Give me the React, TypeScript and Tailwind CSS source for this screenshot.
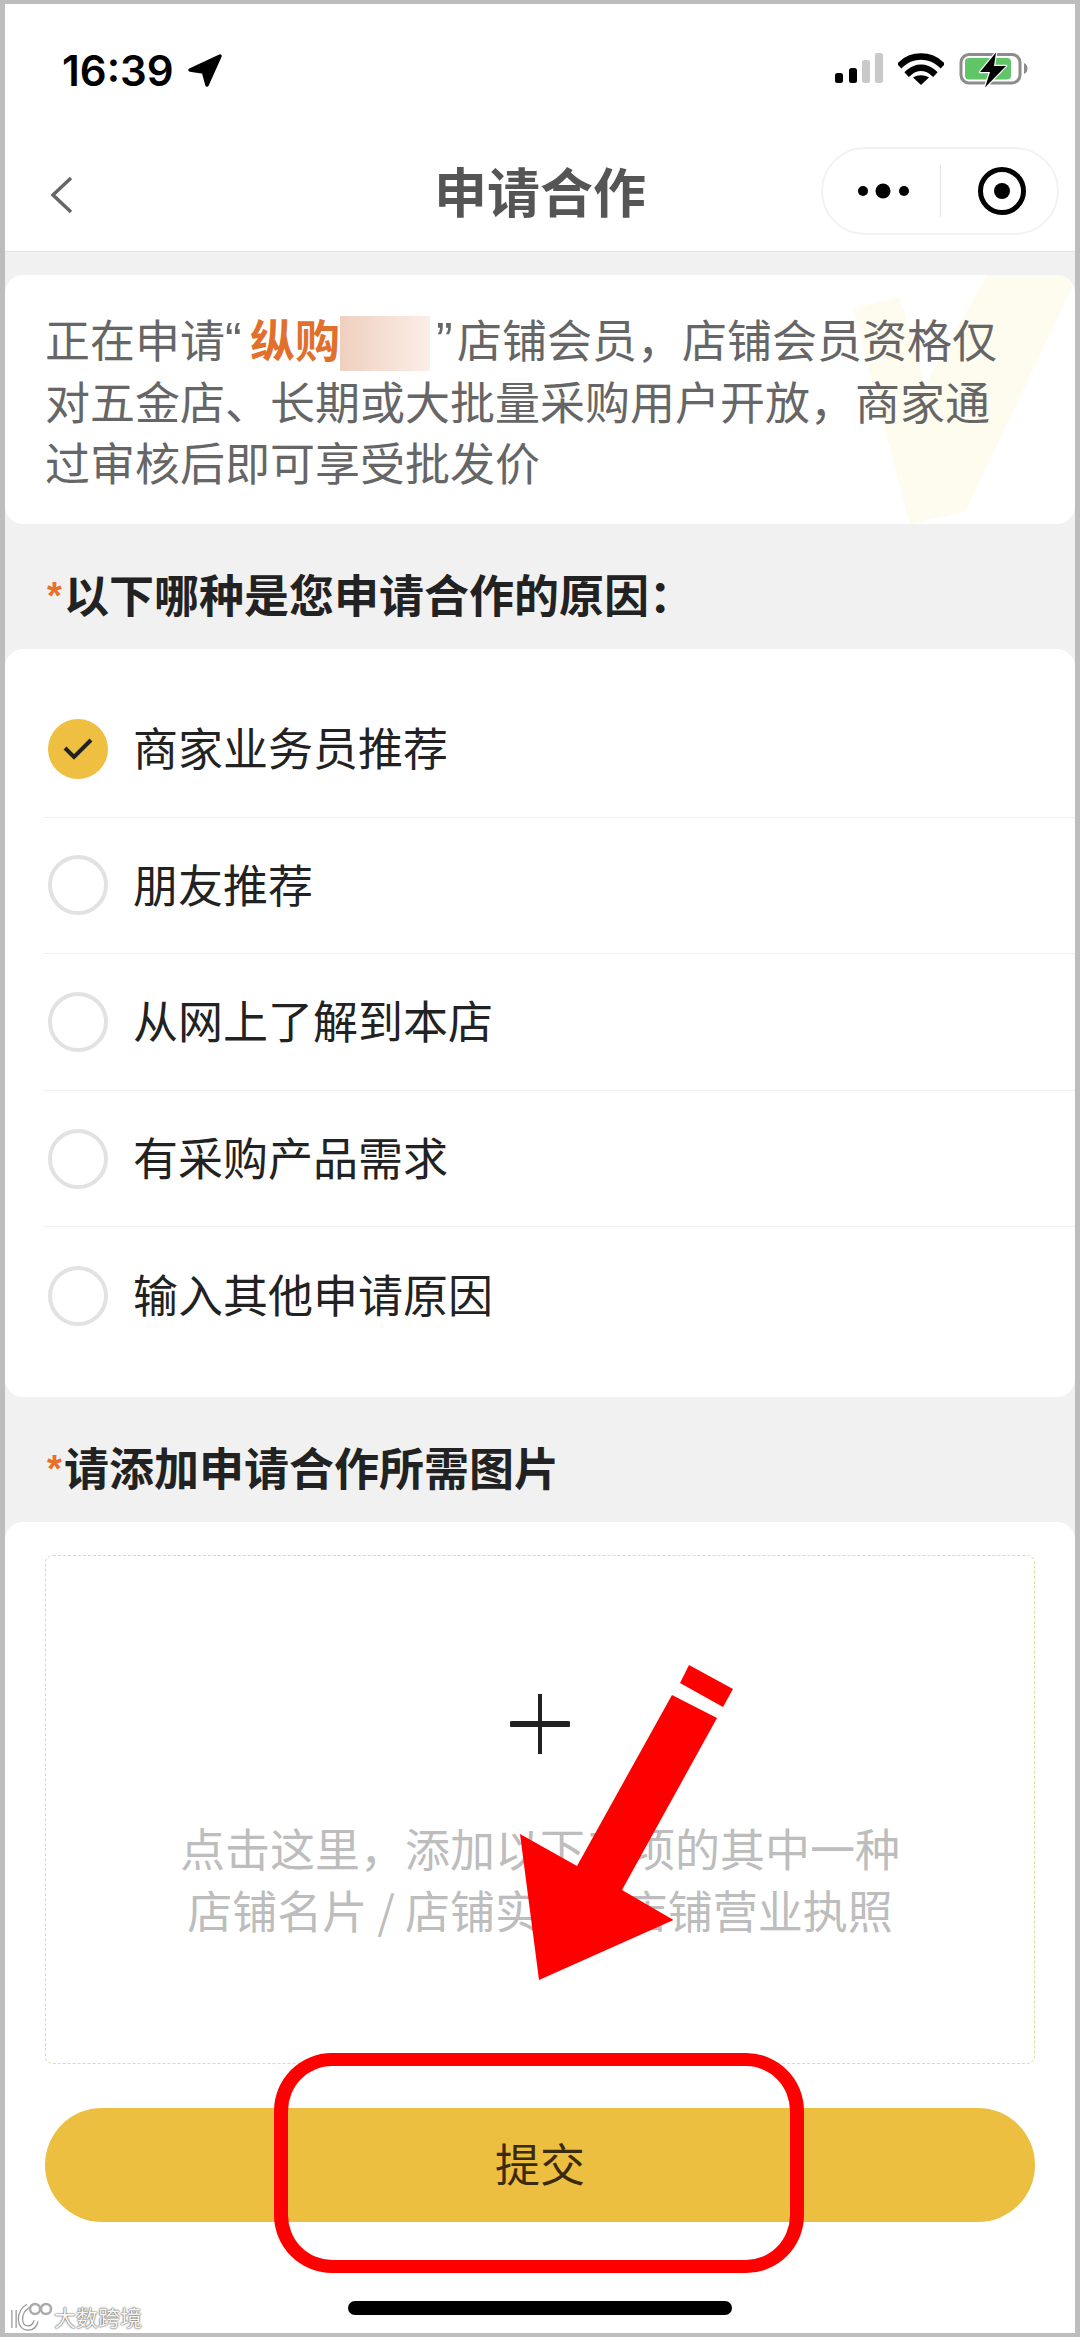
const cjk = "font-['Noto_Sans_CJK_SC','Noto_Sans',sans-serif]";

const reasons = ["商家业务员推荐", "朋友推荐", "从网上了解到本店", "有采购产品需求", "输入其他申请原因"];

function StatusBar() {
  return (
    <div className="flex h-[135px] items-start justify-between bg-white pl-[57px] pr-[46px] pt-[42px]">
      <div className="flex items-center">
        <span className="font-['Inter',sans-serif] text-[42px] font-semibold leading-[50px] text-black">16:39</span>
        <svg width="36" height="36" viewBox="0 0 36 36" className="ml-[13px]">
          <path d="M3 17 L33 3 L20 32 L16.500 19 Z" fill="#000" stroke="#000" strokeWidth="3.500" strokeLinejoin="round" />
        </svg>
      </div>
      <div className="mt-[7px] flex items-start">
        {/* signal */}
        <svg width="48" height="31" viewBox="0 0 48 31">
          <rect x="0" y="20" width="8" height="10" rx="2.500" fill="#000" />
          <rect x="14" y="15" width="8" height="15" rx="2.500" fill="#000" />
          <rect x="27" y="7" width="8" height="23" rx="2.500" fill="#c9c9c9" />
          <rect x="40" y="0" width="8" height="30" rx="2.500" fill="#c9c9c9" />
        </svg>
        {/* wifi */}
        <svg width="46" height="33" viewBox="0 0 46 33" className="ml-[15px] -mt-[1px]">
          <path d="M3.500 12 C14 2 32 2 42.500 12" fill="none" stroke="#000" strokeWidth="6.500" strokeLinecap="square" />
          <path d="M11 20.500 C18 14 28 14 35 20.500" fill="none" stroke="#000" strokeWidth="6.500" strokeLinecap="square" />
          <path d="M15 25.500 C20 22.500 26 22.500 31 25.500 L23 33 Z" fill="#000" />
        </svg>
        {/* battery, charging */}
        <svg width="70" height="36" viewBox="0 0 70 36" className="ml-[15px] -mt-[1px]">
          <rect x="2" y="2.500" width="59" height="28.500" rx="8" fill="#fff" stroke="#8c8c8c" strokeWidth="3" />
          <rect x="6" y="6" width="46" height="21.500" rx="4" fill="#5fc566" />
          <path d="M65 11 C67.500 12 68.500 14 68.500 16.500 C68.500 19 67.500 21 65 22 Z" fill="#8c8c8c" />
          <path d="M37 0.500 L21 20 L31 20 L26 35.500 L47 14 L35 14 Z" fill="#000" stroke="#fff" strokeWidth="2.500" strokeLinejoin="round" paintOrder="stroke" />
        </svg>
      </div>
    </div>
  );
}

function NavBar() {
  return (
    <div className="relative flex h-[113px] items-start justify-between border-b border-[#e4e4e4] bg-white pl-[45px] pr-[16px]">
      <svg width="28" height="38" viewBox="0 0 28 38" className="mt-[37px]">
        <path d="M21 2 L3 19 L21 36" fill="none" stroke="#666" strokeWidth="3.500" />
      </svg>
      <div className={`absolute left-0 right-0 top-[16px] text-center text-[53px] font-bold leading-[70px] text-[#555] ${cjk}`}>申请合作</div>
      <div className="mt-[8px] flex h-[88px] w-[238px] items-center rounded-full border-2 border-[#f2f2f2] bg-white">
        <svg width="54" height="18" viewBox="0 0 54 18" className="ml-[34px]">
          <circle cx="6" cy="9" r="5" fill="#000" />
          <circle cx="26" cy="9" r="7.500" fill="#000" />
          <circle cx="47" cy="9" r="5" fill="#000" />
        </svg>
        <div className="ml-[29px] h-[52px] w-[1px] bg-[#e6e6e6]" />
        <svg width="50" height="50" viewBox="0 0 50 50" className="ml-[36px]">
          <circle cx="25" cy="25" r="21.500" fill="none" stroke="#000" strokeWidth="5" />
          <circle cx="25" cy="25" r="8" fill="#000" />
        </svg>
      </div>
    </div>
  );
}

function Heading({ children }: { children: React.ReactNode }) {
  return (
    <div className={`flex h-[125px] items-center pl-[42px] pt-[15px] text-[45px] font-bold leading-[60px] text-[#222] ${cjk}`}>
      <span className="relative top-[2px] w-[17px] font-['Liberation_Sans',sans-serif] text-[38px] font-bold text-[#e8702a]">*</span>
      {children}
    </div>
  );
}

function Reason({ label, checked, last }: { label: string; checked: boolean; last: boolean }) {
  return (
    <div className={`ml-[39px] flex h-[136.600px] items-center pl-[4px] ${last ? "" : "border-b border-[#efefef]"}`}>
      {checked ? (
        <div className="flex h-[60px] w-[60px] items-center justify-center rounded-full bg-[#efbf42]">
          <svg width="32" height="26" viewBox="0 0 32 26">
            <path d="M3 12 L12 21 L29 4" fill="none" stroke="#222" strokeWidth="4" />
          </svg>
        </div>
      ) : (
        <div className="h-[60px] w-[60px] rounded-full border-[4px] border-[#e2e2e2]" />
      )}
      <span className={`ml-[25px] pb-[3px] text-[45px] leading-[60px] text-[#222] ${cjk}`}>{label}</span>
    </div>
  );
}

export default function App() {
  return (
    <div className={`relative h-[2337px] w-[1080px] overflow-hidden border-x-[5px] border-b-[4px] border-t-[4px] border-[#bdbdbd] bg-[#f1f1f1] ${cjk}`}>
      <StatusBar />
      <NavBar />

      {/* intro card */}
      <div className="relative mt-[23px] h-[249px] overflow-hidden rounded-[18px] bg-white pl-[40px] pt-[33px] text-[45px] leading-[61.500px] text-[#666]">
        <svg width="230" height="250" viewBox="0 0 230 250" className="absolute left-[843px] top-0">
          <path d="M5 33 L52 22 L77 110 L139 0 L230 0 L117 237 L62 249 Z" fill="#fefbef" />
        </svg>
        <div className="relative whitespace-nowrap">
          正在申请<span className="inline-block w-[25px] font-['Liberation_Sans',sans-serif] text-[50px] leading-[40px]">“</span>
          <span className="font-bold text-[#e2702d]">纵购</span>
          <span className="relative -top-[2px] -my-[10px] inline-block h-[55px] w-[90px] bg-gradient-to-r from-[#efd0bf] to-[#fbeee8] align-middle" />
          <span className="inline-block w-[27px] pl-[6px] font-['Liberation_Sans',sans-serif] text-[50px] leading-[40px]">”</span>
          店铺会员，店铺会员资格仅
          <br />
          对五金店、长期或大批量采购用户开放，商家通
          <br />
          过审核后即可享受批发价
        </div>
      </div>

      <Heading>以下哪种是您申请合作的原因：</Heading>

      <div className="rounded-[18px] bg-white pb-[33px] pt-[32px]">
        {reasons.map((r, i) => (
          <Reason key={r} label={r} checked={i === 0} last={i === reasons.length - 1} />
        ))}
      </div>

      <Heading>请添加申请合作所需图片</Heading>

      <div className="h-[811px] rounded-t-[18px] bg-white px-[40px] pt-[33px]">
        <div className="flex h-[509px] flex-col items-center rounded-[8px] border border-dashed border-[#e0dca0] pt-[138px]">
          <svg width="60" height="60" viewBox="0 0 60 60">
            <path d="M30 0 V60" stroke="#222" strokeWidth="4" strokeLinecap="round" />
            <path d="M2 30 H58" stroke="#222" strokeWidth="6" strokeLinecap="round" />
          </svg>
          <div className="mt-[63px] whitespace-nowrap text-center text-[45px] leading-[62px] text-[#bdbdbd]">
            点击这里，添加以下三项的其中一种
            <br />
            店铺名片 / 店铺实景 / 店铺营业执照
          </div>
        </div>
        <button className="mt-[44px] flex h-[114px] w-full items-center justify-center rounded-full bg-[#ecbf41] pb-[4px] text-[45px] leading-[60px] text-[#3b2a0c]">
          提交
        </button>
      </div>

      {/* annotations drawn over the screenshot */}
      <svg width="230" height="330" viewBox="0 0 230 330" className="absolute left-[505px] top-[1652px]">
        <path d="M179 9 L223 33 L213 51 L170 27 Z" fill="#ff0000" />
        <path d="M162 39 L207 62 L112 234 L163.500 264 L29 324 L10 178 L67 210 Z" fill="#ff0000" />
      </svg>
      <div className="absolute left-[269px] top-[2049px] h-[220px] w-[530px] rounded-[58px] border-x-[14px] border-y-[13px] border-[#ff0000]" />

      <div className="absolute left-[343px] top-[2297px] h-[14px] w-[384px] rounded-full bg-black" />

      {/* watermark */}
      <div className="absolute left-[3px] top-[2296px] flex items-center">
        <svg width="46" height="32" viewBox="0 0 46 32">
          <path d="M6 10 V28 M20 6 C10 12 10 28 20 28 C25 28 27 25 28 21" fill="none" stroke="#999" strokeWidth="5.500" />
          <path d="M6 10 V28 M20 6 C10 12 10 28 20 28 C25 28 27 25 28 21" fill="none" stroke="#fff" strokeWidth="3" />
          <circle cx="27" cy="9" r="5" fill="none" stroke="#aaa" strokeWidth="2.500" />
          <circle cx="38" cy="9" r="5" fill="none" stroke="#aaa" strokeWidth="2.500" />
        </svg>
        <span className="text-[22px] leading-[32px] text-[#f6f6f6] [text-shadow:0_0_2px_#555,0_0_1px_#555]">大数跨境</span>
      </div>
    </div>
  );
}
